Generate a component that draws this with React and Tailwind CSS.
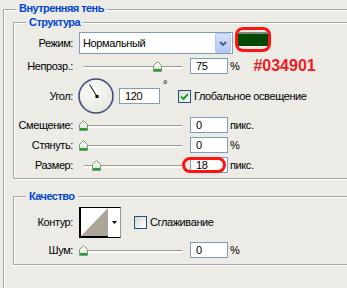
import React from "react";

function Thumb({ left }) {
  return (
    <svg
      width="9"
      height="11"
      viewBox="0 0 9 11"
      className="absolute top-[3px]"
      style={{ left }}
    >
      <defs>
        <linearGradient id="thumbFill" x1="0" y1="0" x2="0" y2="1">
          <stop offset="0" stopColor="#ffffff" />
          <stop offset="1" stopColor="#dcdcd4" />
        </linearGradient>
      </defs>
      <path d="M0.5 4.5 L4.5 0.5 L8.5 4.5 V10.5 H0.5 Z" fill="url(#thumbFill)" stroke="#7d9685" />
      <rect x="1" y="8" width="7" height="2" fill="#1fa32a" />
    </svg>
  );
}

function Slider({ pos }) {
  return (
    <div className="relative flex h-[16px] w-[104px] items-center">
      <div className="ml-[4px] mt-[2px] h-[3px] flex-1 rounded-full border-t border-[#9d9c94] bg-[#fbfbf9]" />
      <Thumb left={pos} />
    </div>
  );
}

function Field({ value, className = "w-[38px]" }) {
  return (
    <input
      readOnly
      value={value}
      className={`h-[16px] border border-[#7f9db9] bg-white pl-[5px] text-[11px] leading-[14px] outline-none ${className}`}
    />
  );
}

function Checkbox({ checked }) {
  return (
    <div className="flex h-[13px] w-[13px] items-center justify-center border border-[#1c5180] bg-gradient-to-br from-[#d8d8d2] to-white">
      {checked && (
        <svg width="9" height="9" viewBox="0 0 9 9">
          <path d="M1 4.5 L3.5 7 L8 2" fill="none" stroke="#21a121" strokeWidth="2" />
        </svg>
      )}
    </div>
  );
}

function Row({ label, className = "", children }) {
  return (
    <div className={`flex items-center ${className}`}>
      <span className="w-[59px] text-right">{label}</span>
      <div className="ml-[6px] flex items-center">{children}</div>
    </div>
  );
}

function GroupTitle({ children, className = "" }) {
  return (
    <div className={`ml-[12px] w-fit bg-[#ecebe6] px-[3px] font-bold tracking-[-0.55px] text-[#0046d5] ${className}`}>
      {children}
    </div>
  );
}

function Dial() {
  return (
    <svg width="36" height="36" viewBox="0 0 36 36" className="-ml-[1px]">
      <defs>
        <radialGradient id="dialFill" cx="0.4" cy="0.35" r="0.7">
          <stop offset="0" stopColor="#fbfbf9" />
          <stop offset="1" stopColor="#e6e6e0" />
        </radialGradient>
      </defs>
      <circle cx="18" cy="18" r="17" fill="url(#dialFill)" stroke="#3f5080" strokeWidth="1.6" />
      <line x1="19" y1="18.5" x2="11.5" y2="6.5" stroke="#000" strokeWidth="1" />
      <rect x="17.5" y="17" width="3" height="3" fill="#000" />
    </svg>
  );
}

export default function App() {
  return (
    <div className="h-[288px] w-[347px] overflow-hidden bg-[#ecebe6] font-['Liberation_Sans',Arial,sans-serif] text-[11px] leading-[13px] tracking-[-0.4px] text-black">
      <div className="ml-[3px] mt-[9px] h-[320px] w-[380px] border-l border-t border-[#aaa89c] shadow-[inset_1px_1px_0_#fff]">
        <GroupTitle className="-mt-[8px]">Внутренняя тень</GroupTitle>

        <section className="ml-[9px] mt-[7px] w-[360px] border-b border-l border-t border-[#aaa89c] pb-[5px] shadow-[inset_1px_1px_0_#fff,0_1px_0_#fff]">
          <GroupTitle className="-mt-[7px]">Структура</GroupTitle>

          <Row label="Режим:" className="mt-[2px] h-[24px]">
            <div className="flex h-[22px] w-[154px] items-center border border-[#7f9db9] bg-white">
              <span className="flex-1 pl-[3px]">Нормальный</span>
              <div className="mr-[1px] flex h-[20px] w-[16px] items-center justify-center rounded-[2px] border border-[#b7c9f5] bg-gradient-to-b from-[#d5e1fd] to-[#b3c7f5]">
                <svg width="8" height="5" viewBox="0 0 8 5">
                  <path d="M1 1 L4 4 L7 1" fill="none" stroke="#4d6185" strokeWidth="2" />
                </svg>
              </div>
            </div>
            <div className="-mt-[8px] ml-[2px] flex h-[25px] w-[36px] items-center justify-center rounded-[8px] border-[3px] border-[#ff1212]">
              <div className="h-[14px] w-[30px] border-t-2 border-[#7c8a7c] bg-[#034901]" />
            </div>
          </Row>

          <Row label="Непрозр.:" className="mt-[3px] h-[16px]">
            <Slider pos={74} />
            <div className="ml-[7px]"><Field value="75" /></div>
            <span className="ml-[2px]">%</span>
            <span className="ml-[14px] text-[16px] font-bold leading-[16px] tracking-normal text-[#ee1c24]">#034901</span>
          </Row>

          <Row label="Угол:" className="mt-[4px] h-[36px]">
            <Dial />
            <div className="ml-[5px]"><Field value="120" className="w-[41px]" /></div>
            <span className="ml-[3px] self-start">°</span>
            <div className="ml-[11px]"><Checkbox checked /></div>
            <span className="ml-[3px]">Глобальное освещение</span>
          </Row>

          <Row label="Смещение:" className="mt-[3px] h-[16px]">
            <Slider pos={0} />
            <div className="ml-[7px]"><Field value="0" /></div>
            <span className="ml-[2px]">пикс.</span>
          </Row>

          <Row label="Стянуть:" className="mt-[4px] h-[16px]">
            <Slider pos={0} />
            <div className="ml-[7px]"><Field value="0" /></div>
            <span className="ml-[2px]">%</span>
          </Row>

          <Row label="Размер:" className="mt-[4px] h-[16px]">
            <Slider pos={13} />
            <div className="relative ml-[7px]">
              <Field value="18" />
              <div className="absolute -left-[8px] top-0 h-[16px] w-[44px] rounded-[8px] border-[3px] border-[#ff1212]" />
            </div>
            <span className="ml-[2px]">пикс.</span>
          </Row>
        </section>

        <section className="ml-[9px] mt-[17px] w-[360px] border-b border-l border-t border-[#aaa89c] pb-[6px] shadow-[inset_1px_1px_0_#fff,0_1px_0_#fff]">
          <GroupTitle className="-mt-[7px]">Качество</GroupTitle>

          <Row label="Контур:" className="mt-[3px] h-[32px]">
            <div className="flex h-[31px] w-[42px] border border-black border-r-[#9a9a94] bg-white">
              <svg width="28" height="29" viewBox="0 0 28 29" className="border-b border-l border-black">
                <polygon points="0,29 28,0 28,29" fill="#aba697" />
              </svg>
              <div className="flex flex-1 items-center justify-center">
                <svg width="5" height="3" viewBox="0 0 5 3">
                  <polygon points="0,0 5,0 2.5,3" fill="#000" />
                </svg>
              </div>
            </div>
            <div className="ml-[13px]"><Checkbox /></div>
            <span className="ml-[3px]">Сглаживание</span>
          </Row>

          <Row label="Шум:" className="mt-[4px] h-[16px]">
            <Slider pos={0} />
            <div className="ml-[7px]"><Field value="0" /></div>
            <span className="ml-[2px]">%</span>
          </Row>
        </section>
      </div>
    </div>
  );
}
